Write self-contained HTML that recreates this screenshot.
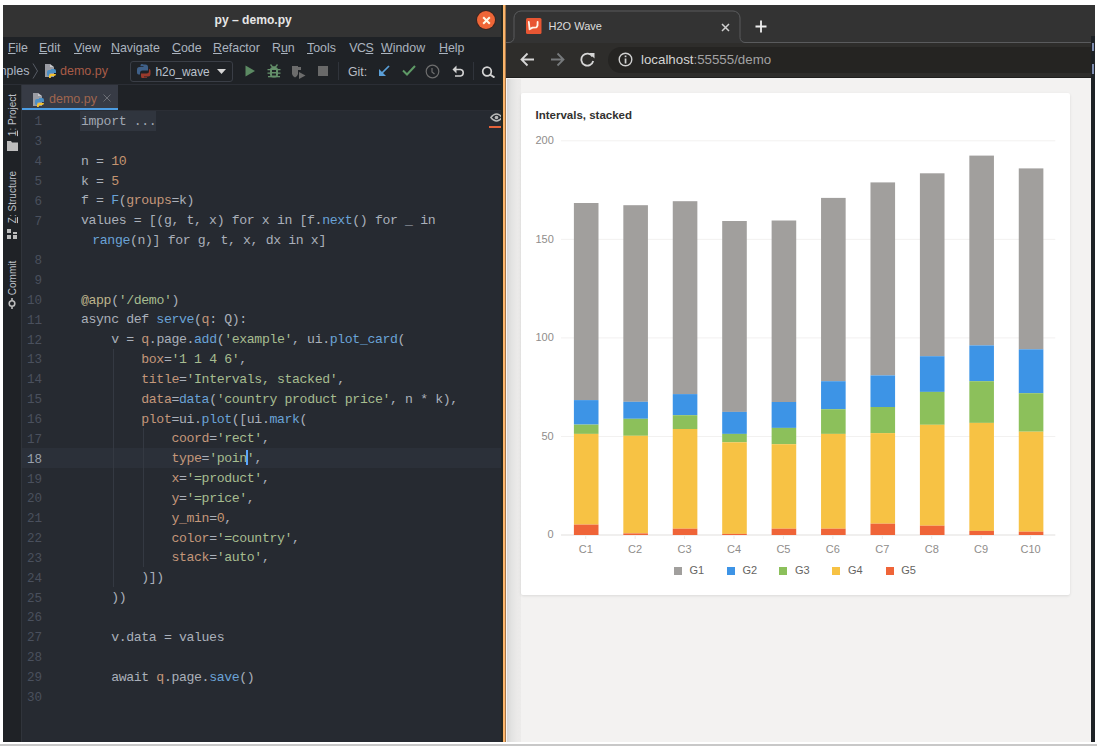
<!DOCTYPE html>
<html><head><meta charset="utf-8">
<style>
*{margin:0;padding:0;box-sizing:border-box}
html,body{width:1097px;height:746px;overflow:hidden;background:#fff;font-family:"Liberation Sans",sans-serif}
.a{position:absolute}
#botline{left:0;top:744px;width:1097px;height:2px;background:#c8c8c8}
/* IDE */
#ide{left:3px;top:5px;width:500px;height:737px;background:#1f2226}
#ttl{left:3px;top:5px;width:500px;height:32px;background:#333333}
#ttltxt{left:214.5px;top:13.3px;font-weight:bold;font-size:12.1px;line-height:14px;color:#e6e6e6;white-space:nowrap}
#closebtn{left:477px;top:11px;width:18px;height:18px;border-radius:50%;background:#ef6637;box-shadow:0 0 0 1px #3a2520}
.mi{position:absolute;top:41px;font-size:12.4px;line-height:14px;color:#abb4bf;white-space:nowrap}
.mi u{text-decoration:underline;text-underline-offset:1px}
#sep1{left:3px;top:84px;width:500px;height:1px;background:#2b2e35}
#sep2{left:22px;top:110px;width:481px;height:1px;background:#2b2e35}
#lsep{left:21px;top:85px;width:1px;height:657px;background:#30343b}
#tabact{left:22px;top:85px;width:96px;height:23px;background:#373b45}
#tabline{left:22px;top:108px;width:96px;height:3px;background:#4c9de3}
#editor{left:22px;top:111px;width:481px;height:631px;background:#262a31;overflow:hidden}
#curline{left:0;width:481px;height:19.84px;background:#2b3039}
.ln{position:absolute;left:1px;margin-top:2.4px;width:19px;text-align:right;font-family:"Liberation Mono",monospace;font-size:12.57px;line-height:19.84px;color:#4a505d}
.ln.cur{color:#9aa1ad}
.cl{position:absolute;left:59px;margin-top:1px;font-family:"Liberation Mono",monospace;font-size:13.2px;letter-spacing:-0.378px;line-height:19.84px;color:#aab0ba;white-space:pre}
.n{color:#c49470}.s{color:#a6bd90}.f{color:#6aa3d7}.p{color:#c4977a}.d{color:#bfb58c}
.imp{background:#30353e;color:#a2a9b4;display:inline-block;padding:0 1px;margin-left:-1px}
.caret{display:inline-block;width:2px;height:15px;background:#5aa6ff;vertical-align:-3px;margin:0 -1px}
.rot{left:-16.6px;width:60px;height:14px;transform:rotate(-90deg);transform-origin:center;font-size:10px;line-height:14px;color:#bcc0c8;white-space:nowrap;text-align:center}
.guide{position:absolute;width:1px;background:#343942}
/* browser */
#orng{left:501px;top:5px;width:6px;height:737px;background:linear-gradient(to right,#23261f 0,#23261f 2px,#fbb56b 2px,#fbb56b 4.5px,#a57649 4.5px,#a57649 6px)}
#br{left:506px;top:5px;width:589px;height:737px;background:#f3f2f1}
#strip{left:506px;top:5px;width:589px;height:38px;background:#333333}
#toolbar{left:506px;top:43px;width:589px;height:35px;background:#2e2d2b;border-bottom:1px solid #1f1f1e}
#page{left:506px;top:79px;width:589px;height:663px;background:#f3f2f1}
#shadow{left:507px;top:79px;width:14px;height:663px;background:linear-gradient(to right,#d3d3d3 0,#e2e2e1 4px,#ebeae9 10px,#eceBea 14px)}
#card{left:521px;top:93px;width:549px;height:502px;background:#fff;border-radius:2px;box-shadow:0 1px 3px rgba(0,0,0,0.10)}
#rstrip{left:1091px;top:36px;width:4px;height:706px;background:#1e2226}
.tick{position:absolute;font-size:11px;line-height:12px;color:#8f8d8b;white-space:nowrap}
.leg{position:absolute;font-size:11px;line-height:12px;color:#666462;white-space:nowrap}
.sq{position:absolute;width:8px;height:8px}
</style></head><body>
<div class="a" id="botline"></div>
<div class="a" id="ide"></div>
<div class="a" id="ttl"></div>
<div class="a" id="ttltxt">py – demo.py</div>
<div class="a" id="closebtn"></div>
<svg class="a" style="left:481.5px;top:15.5px" width="9" height="9" viewBox="0 0 9 9"><path d="M1.2 1.2 L7.8 7.8 M7.8 1.2 L1.2 7.8" stroke="#fffbe8" stroke-width="2"/></svg>
<span class="mi" style="left:8px"><u>F</u>ile</span>
<span class="mi" style="left:39px"><u>E</u>dit</span>
<span class="mi" style="left:74px"><u>V</u>iew</span>
<span class="mi" style="left:111px"><u>N</u>avigate</span>
<span class="mi" style="left:172px"><u>C</u>ode</span>
<span class="mi" style="left:213px"><u>R</u>efactor</span>
<span class="mi" style="left:272px">R<u>u</u>n</span>
<span class="mi" style="left:307px"><u>T</u>ools</span>
<span class="mi" style="left:349.3px;letter-spacing:-0.5px">VC<u>S</u></span>
<span class="mi" style="left:381px"><u>W</u>indow</span>
<span class="mi" style="left:439px"><u>H</u>elp</span>
<div class="a" style="left:3px;top:58px;width:498px;height:26px;overflow:hidden">
 <div class="a" style="left:-27px;top:5.5px;font-size:12.5px;line-height:14px;color:#adb6c2;white-space:nowrap">examples</div>
</div>
<svg class="a" style="left:32px;top:63px" width="7" height="16" viewBox="0 0 7 16"><polyline points="1,0.5 5.5,8 1,15.5" fill="none" stroke="#585d66" stroke-width="1"/></svg>
<svg class="a" style="left:44px;top:63px" width="14" height="15" viewBox="0 0 14 15">
 <path d="M1 1 H6 V4 H10 V14 H1 Z" fill="#9a9ca3"/><path d="M6 1 L10 4 H6 Z" fill="#c8c9cd"/>
 <path d="M7 6 h3 a2 2 0 0 1 2 2 v2 h-5 a2 2 0 0 0 -2 2 v1 h-1 a2 2 0 0 1 -1 -2 v-2 a2 2 0 0 1 2 -2 h2z" fill="#4c8fc4"/>
 <path d="M12 9 v2 a2 2 0 0 1 -2 2 h-3 v1.5 a1 1 0 0 1 -1 0.5 h-1 v-2 a2 2 0 0 1 2 -2 h5z" fill="#f2c230"/>
</svg>
<div class="a" style="left:60px;top:64px;font-size:12.5px;line-height:14px;color:#a85c48;white-space:nowrap">demo.py</div>
<div class="a" style="left:130px;top:61px;width:103px;height:21px;border:1px solid #3a3e46;border-radius:3px"></div>
<svg class="a" style="left:137px;top:64px" width="14" height="14" viewBox="0 0 14 14">
 <path d="M6.5 0.5 h2 a2.5 2.5 0 0 1 2.5 2.5 v3.5 h-5.5 a2.5 2.5 0 0 0 -2.5 2.5 v1.5 h-1.5 a1.8 1.8 0 0 1 -1.5 -1.8 v-3.2 a2.5 2.5 0 0 1 2.5 -2.5 h4 v-0.8 h-3 v-1 a1.5 1.5 0 0 1 1.5 -1.2z" fill="#3f6088"/>
 <path d="M12 5 a1.8 1.8 0 0 1 1.5 1.8 v3.2 a2.5 2.5 0 0 1 -2.5 2.5 h-4 v0.8 h3 v0.5 a1.5 1.5 0 0 1 -1.5 0.7 h-2 a2.5 2.5 0 0 1 -2.5 -2.5 v-2.5 h5.5 a2.5 2.5 0 0 0 2.5 -2.5 v-1.5z" fill="#9a3a2c"/>
</svg>
<div class="a" style="left:155.5px;top:65px;font-size:11.9px;line-height:14px;color:#bac1cc;white-space:nowrap">h2o_wave</div>
<svg class="a" style="left:217px;top:69px" width="9" height="5" viewBox="0 0 9 5"><path d="M0 0 H9 L4.5 5Z" fill="#d6d6d6"/></svg>
<svg class="a" style="left:245px;top:65px" width="11" height="12" viewBox="0 0 11 12"><path d="M0.5 0.5 L10 6 L0.5 11.5Z" fill="#5c8a63"/></svg>
<svg class="a" style="left:267px;top:64px" width="14" height="14" viewBox="0 0 14 14" fill="#64906a">
 <path d="M3.5 0.5 L5.5 3 H8.5 L10.5 0.5" stroke="#64906a" stroke-width="1.3" fill="none"/>
 <rect x="3" y="3" width="8" height="10.5" rx="3"/>
 <rect x="0.5" y="5" width="13" height="1.3"/><rect x="0.5" y="8.5" width="13" height="1.3"/><rect x="1" y="12" width="12" height="1.3"/>
 <rect x="5" y="6" width="4" height="2" fill="#1f2226"/><rect x="5" y="9.5" width="4" height="2" fill="#1f2226"/>
</svg>
<svg class="a" style="left:291px;top:65px" width="16" height="14" viewBox="0 0 16 14">
 <path d="M1 1 H7 V2 H10 V5 H7 V9 L6 11 L4 12.5 L2 11 L1 9Z" fill="#6c6c6c"/>
 <path d="M8 7 L14.5 10.5 L8 14Z" fill="#6c6c6c"/>
</svg>
<div class="a" style="left:318px;top:66px;width:10px;height:10px;background:#696969"></div>
<div class="a" style="left:338px;top:62px;width:1px;height:18px;background:#30343b"></div>
<div class="a" style="left:348px;top:64.5px;font-size:12.3px;line-height:14px;color:#b9bdc4;white-space:nowrap">Git:</div>
<svg class="a" style="left:378px;top:65px" width="12" height="12" viewBox="0 0 12 12"><path d="M11 1 L2 10" stroke="#5a9fd8" stroke-width="1.7"/><path d="M1 4 V11 H8 Z" fill="#5a9fd8"/></svg>
<svg class="a" style="left:402px;top:65px" width="14" height="11" viewBox="0 0 14 11"><path d="M1 5.5 L5 9.5 L13 1" stroke="#5e9a66" stroke-width="2" fill="none"/></svg>
<svg class="a" style="left:425px;top:64px" width="15" height="15" viewBox="0 0 15 15"><circle cx="7.5" cy="7.5" r="6.3" stroke="#6e6e6e" stroke-width="1.2" fill="none"/><path d="M7 4 V8 L9.5 10" stroke="#6e6e6e" stroke-width="1.2" fill="none"/></svg>
<svg class="a" style="left:452px;top:65px" width="13" height="12" viewBox="0 0 13 12"><path d="M3 4.5 H8.5 A3.3 3.3 0 0 1 8.5 11 H3" stroke="#d2d2d2" stroke-width="1.6" fill="none"/><path d="M0.5 4.5 L4.5 0.5 V8.5Z" fill="#d2d2d2"/></svg>
<div class="a" style="left:473px;top:62px;width:1px;height:18px;background:#30343b"></div>
<svg class="a" style="left:481px;top:66px" width="15" height="12" viewBox="0 0 15 12"><circle cx="6" cy="5.5" r="4.3" stroke="#d4d4d4" stroke-width="1.7" fill="none"/><path d="M9 8.5 L13.5 11.5" stroke="#d4d4d4" stroke-width="2"/></svg>

<div class="a" id="sep1"></div>
<div class="a" id="lsep"></div>
<div class="a" id="tabact"></div>
<div class="a" id="tabline"></div>
<svg class="a" style="left:32px;top:92px" width="14" height="15" viewBox="0 0 14 15">
 <path d="M1 1 H6 V4 H10 V14 H1 Z" fill="#9a9ca3"/><path d="M6 1 L10 4 H6 Z" fill="#c8c9cd"/>
 <path d="M7 6 h3 a2 2 0 0 1 2 2 v2 h-5 a2 2 0 0 0 -2 2 v1 h-1 a2 2 0 0 1 -1 -2 v-2 a2 2 0 0 1 2 -2 h2z" fill="#4c8fc4"/>
 <path d="M12 9 v2 a2 2 0 0 1 -2 2 h-3 v1.5 a1 1 0 0 1 -1 0.5 h-1 v-2 a2 2 0 0 1 2 -2 h5z" fill="#f2c230"/>
</svg>
<div class="a" style="left:49px;top:92px;font-size:12.5px;line-height:14px;color:#a0664e;white-space:nowrap">demo.py</div>
<svg class="a" style="left:103px;top:94px" width="8" height="8" viewBox="0 0 8 8"><path d="M0.5 0.5 L7.5 7.5 M7.5 0.5 L0.5 7.5" stroke="#6b6e75" stroke-width="1"/></svg>

<div class="a" id="sep2"></div>
<div class="a" id="editor">
<div class="a" id="curline" style="top:337.28px"></div>
<div class="a" style="left:58px;top:0;width:76px;height:20px;background:#30353e"></div>
<div class="guide" style="left:91px;top:238.08px;height:238.08px"></div>
<div class="guide" style="left:121px;top:317.44px;height:138.88px"></div>
<div class="ln" style="top:0.00px">1</div>
<div class="cl" style="top:0.00px"><span style="color:#a0a7b2">import ...</span></div>
<div class="ln" style="top:19.84px">3</div>
<div class="ln" style="top:39.68px">4</div>
<div class="cl" style="top:39.68px">n = <span class="n">10</span></div>
<div class="ln" style="top:59.52px">5</div>
<div class="cl" style="top:59.52px">k = <span class="n">5</span></div>
<div class="ln" style="top:79.36px">6</div>
<div class="cl" style="top:79.36px">f = <span class="f">F</span>(<span class="p">groups</span>=k)</div>
<div class="ln" style="top:99.20px">7</div>
<div class="cl" style="top:99.20px">values = [(g, t, x) for x in [f.<span class="f">next</span>() for _ in</div>
<div class="cl" style="top:119.04px;left:70.3px"><span class="f">range</span>(n)] for g, t, x, dx in x]</div>
<div class="ln" style="top:138.88px">8</div>
<div class="ln" style="top:158.72px">9</div>
<div class="ln" style="top:178.56px">10</div>
<div class="cl" style="top:178.56px"><span class="d">@app</span>(<span class="s">'/demo'</span>)</div>
<div class="ln" style="top:198.40px">11</div>
<div class="cl" style="top:198.40px">async def <span class="f">serve</span>(<span class="p">q</span>: Q):</div>
<div class="ln" style="top:218.24px">12</div>
<div class="cl" style="top:218.24px">    v = <span class="p">q</span>.page.<span class="f">add</span>(<span class="s">'example'</span>, ui.<span class="f">plot_card</span>(</div>
<div class="ln" style="top:238.08px">13</div>
<div class="cl" style="top:238.08px">        <span class="p">box</span>=<span class="s">'1 1 4 6'</span>,</div>
<div class="ln" style="top:257.92px">14</div>
<div class="cl" style="top:257.92px">        <span class="p">title</span>=<span class="s">'Intervals, stacked'</span>,</div>
<div class="ln" style="top:277.76px">15</div>
<div class="cl" style="top:277.76px">        <span class="p">data</span>=<span class="f">data</span>(<span class="s">'country product price'</span>, n * k),</div>
<div class="ln" style="top:297.60px">16</div>
<div class="cl" style="top:297.60px">        <span class="p">plot</span>=ui.<span class="f">plot</span>([ui.<span class="f">mark</span>(</div>
<div class="ln" style="top:317.44px">17</div>
<div class="cl" style="top:317.44px">            <span class="p">coord</span>=<span class="s">'rect'</span>,</div>
<div class="ln cur" style="top:337.28px">18</div>
<div class="cl" style="top:337.28px">            <span class="p">type</span>=<span class="s">'poin</span><span class="caret"></span><span class="s">'</span>,</div>
<div class="ln" style="top:357.12px">19</div>
<div class="cl" style="top:357.12px">            <span class="p">x</span>=<span class="s">'=product'</span>,</div>
<div class="ln" style="top:376.96px">20</div>
<div class="cl" style="top:376.96px">            <span class="p">y</span>=<span class="s">'=price'</span>,</div>
<div class="ln" style="top:396.80px">21</div>
<div class="cl" style="top:396.80px">            <span class="p">y_min</span>=<span class="n">0</span>,</div>
<div class="ln" style="top:416.64px">22</div>
<div class="cl" style="top:416.64px">            <span class="p">color</span>=<span class="s">'=country'</span>,</div>
<div class="ln" style="top:436.48px">23</div>
<div class="cl" style="top:436.48px">            <span class="p">stack</span>=<span class="s">'auto'</span>,</div>
<div class="ln" style="top:456.32px">24</div>
<div class="cl" style="top:456.32px">        )])</div>
<div class="ln" style="top:476.16px">25</div>
<div class="cl" style="top:476.16px">    ))</div>
<div class="ln" style="top:496.00px">26</div>
<div class="ln" style="top:515.84px">27</div>
<div class="cl" style="top:515.84px">    v.data = values</div>
<div class="ln" style="top:535.68px">28</div>
<div class="ln" style="top:555.52px">29</div>
<div class="cl" style="top:555.52px">    await <span class="p">q</span>.page.<span class="f">save</span>()</div>
<div class="ln" style="top:575.36px">30</div>
</div>
<div class="a rot" style="top:108.35px"><u>1</u>: Project</div>
<svg class="a" style="left:7px;top:141px" width="11" height="10" viewBox="0 0 11 10"><path d="M0 0 H4 L5 1.5 H11 V10 H0Z" fill="#bdbdbd"/></svg>
<div class="a rot" style="top:190.25px"><u>Z</u>: Structure</div>
<svg class="a" style="left:7px;top:229px" width="10" height="10" viewBox="0 0 10 10" fill="#bdbdbd"><rect x="0" y="0" width="4" height="4"/><rect x="0" y="6" width="4" height="4"/><rect x="6" y="6" width="4" height="4"/><rect x="6" y="3" width="4" height="2"/></svg>
<div class="a rot" style="top:271.25px">Commit</div>
<svg class="a" style="left:6px;top:298px" width="12" height="11" viewBox="0 0 12 11"><circle cx="6" cy="5.5" r="2.8" stroke="#bdbdbd" stroke-width="1.6" fill="none"/><path d="M6 0 V2.5 M6 8.5 V11" stroke="#bdbdbd" stroke-width="1.6"/></svg>
<svg class="a" style="left:490px;top:113px" width="13" height="9" viewBox="0 0 13 9"><path d="M0.8 4.5 Q6.5 -2.5 12.2 4.5 Q6.5 11.5 0.8 4.5Z" stroke="#b8b8b8" stroke-width="1.3" fill="none"/><circle cx="6.5" cy="4.5" r="1.8" fill="#b8b8b8"/></svg>
<div class="a" style="left:489px;top:126px;width:14px;height:2px;background:#e5623a"></div>

<div class="a" id="orng"></div>
<div class="a" id="br"></div>
<div class="a" id="strip"></div>
<div class="a" id="toolbar"></div>
<div class="a" id="page"></div>
<div class="a" id="shadow"></div>
<div class="a" id="card"></div>
<svg class="a" style="left:506px;top:5px" width="589" height="40" viewBox="0 0 589 40">
 <path d="M0 37.5 H3 A5 5 0 0 0 8 32.5 V13 A7 7 0 0 1 15 6 H227 A7 7 0 0 1 234 13 V32.5 A5 5 0 0 0 239 37.5 H589" stroke="#5a5b5d" stroke-width="1" fill="none"/>
</svg>
<svg class="a" style="left:526px;top:18px" width="16" height="16" viewBox="0 0 16 16">
 <rect x="0" y="0" width="15.5" height="16" rx="1.5" fill="#e85633"/>
 <path d="M2.8 4 L3.6 11.3 L6.5 9.6 L10.5 9.4 L11.5 7.5 L11.6 4" stroke="#fff6ea" stroke-width="1.8" fill="none" stroke-linejoin="round" stroke-linecap="round"/>
</svg>
<div class="a" style="left:548.5px;top:20px;font-size:11px;line-height:13px;color:#dcdcdc;white-space:nowrap">H2O Wave</div>
<svg class="a" style="left:721px;top:23px" width="9" height="9" viewBox="0 0 9 9"><path d="M1 1 L8 8 M8 1 L1 8" stroke="#d0d0d0" stroke-width="1.5"/></svg>
<svg class="a" style="left:755px;top:20px" width="12" height="13" viewBox="0 0 12 13"><path d="M6 0.5 V12.5 M0.5 6.5 H11.5" stroke="#f0f0f0" stroke-width="1.8"/></svg>
<div class="a" style="left:608px;top:46.5px;width:487px;height:26px;border-radius:13px 0 0 13px;background:#252422"></div>
<svg class="a" style="left:520px;top:52px" width="15" height="15" viewBox="0 0 15 15"><path d="M14 7.5 H1.5 M7.5 1.5 L1.5 7.5 L7.5 13.5" stroke="#d6d6d6" stroke-width="1.8" fill="none"/></svg>
<svg class="a" style="left:550px;top:52px" width="15" height="15" viewBox="0 0 15 15"><path d="M1 7.5 H13.5 M7.5 1.5 L13.5 7.5 L7.5 13.5" stroke="#76797b" stroke-width="1.8" fill="none"/></svg>
<svg class="a" style="left:580px;top:52px" width="16" height="15" viewBox="0 0 16 15"><path d="M12.5 4.5 A6 6 0 1 0 13.2 9" stroke="#d6d6d6" stroke-width="1.8" fill="none"/><path d="M9 1 H14.5 V6.5Z" fill="#d6d6d6"/></svg>
<svg class="a" style="left:618px;top:52px" width="15" height="15" viewBox="0 0 15 15"><circle cx="7.5" cy="7.5" r="6.3" stroke="#d0d0d0" stroke-width="1.4" fill="none"/><rect x="6.7" y="6.5" width="1.7" height="5" fill="#d0d0d0"/><rect x="6.7" y="3.5" width="1.7" height="1.7" fill="#d0d0d0"/></svg>
<div class="a" style="left:641px;top:52.3px;font-size:13.3px;line-height:16px;color:#a2a2a2;white-space:nowrap"><span style="color:#d4d4d4">localhost</span>:55555/demo</div>

<svg class="a" style="left:0;top:0" width="1097" height="746" viewBox="0 0 1097 746">
<rect x="561" y="534.50" width="494.3" height="1" fill="#e1dfdd"/>
<rect x="561" y="435.95" width="494.3" height="1" fill="#f2f1f0"/>
<rect x="561" y="337.40" width="494.3" height="1" fill="#f2f1f0"/>
<rect x="561" y="238.85" width="494.3" height="1" fill="#f2f1f0"/>
<rect x="561" y="140.30" width="494.3" height="1" fill="#f2f1f0"/>
<rect x="573.90" y="203.00" width="24.6" height="197.10" fill="#a19f9d"/>
<rect x="573.90" y="400.10" width="24.6" height="24.50" fill="#3d94e6"/>
<rect x="573.90" y="424.60" width="24.6" height="9.30" fill="#8cc05b"/>
<rect x="573.90" y="433.90" width="24.6" height="90.70" fill="#f7c244"/>
<rect x="573.90" y="524.60" width="24.6" height="10.40" fill="#ef6438"/>
<rect x="585.22" y="536" width="1" height="3" fill="#edebe9"/>
<rect x="623.33" y="205.20" width="24.6" height="196.60" fill="#a19f9d"/>
<rect x="623.33" y="401.80" width="24.6" height="17.00" fill="#3d94e6"/>
<rect x="623.33" y="418.80" width="24.6" height="17.00" fill="#8cc05b"/>
<rect x="623.33" y="435.80" width="24.6" height="97.60" fill="#f7c244"/>
<rect x="623.33" y="533.40" width="24.6" height="1.60" fill="#ef6438"/>
<rect x="634.64" y="536" width="1" height="3" fill="#edebe9"/>
<rect x="672.76" y="201.20" width="24.6" height="192.90" fill="#a19f9d"/>
<rect x="672.76" y="394.10" width="24.6" height="21.10" fill="#3d94e6"/>
<rect x="672.76" y="415.20" width="24.6" height="13.80" fill="#8cc05b"/>
<rect x="672.76" y="429.00" width="24.6" height="99.70" fill="#f7c244"/>
<rect x="672.76" y="528.70" width="24.6" height="6.30" fill="#ef6438"/>
<rect x="684.08" y="536" width="1" height="3" fill="#edebe9"/>
<rect x="722.19" y="221.00" width="24.6" height="190.90" fill="#a19f9d"/>
<rect x="722.19" y="411.90" width="24.6" height="22.00" fill="#3d94e6"/>
<rect x="722.19" y="433.90" width="24.6" height="8.40" fill="#8cc05b"/>
<rect x="722.19" y="442.30" width="24.6" height="91.60" fill="#f7c244"/>
<rect x="722.19" y="533.90" width="24.6" height="1.10" fill="#ef6438"/>
<rect x="733.50" y="536" width="1" height="3" fill="#edebe9"/>
<rect x="771.62" y="220.50" width="24.6" height="181.50" fill="#a19f9d"/>
<rect x="771.62" y="402.00" width="24.6" height="25.90" fill="#3d94e6"/>
<rect x="771.62" y="427.90" width="24.6" height="16.30" fill="#8cc05b"/>
<rect x="771.62" y="444.20" width="24.6" height="84.50" fill="#f7c244"/>
<rect x="771.62" y="528.70" width="24.6" height="6.30" fill="#ef6438"/>
<rect x="782.93" y="536" width="1" height="3" fill="#edebe9"/>
<rect x="821.05" y="197.90" width="24.6" height="183.30" fill="#a19f9d"/>
<rect x="821.05" y="381.20" width="24.6" height="28.00" fill="#3d94e6"/>
<rect x="821.05" y="409.20" width="24.6" height="24.70" fill="#8cc05b"/>
<rect x="821.05" y="433.90" width="24.6" height="94.80" fill="#f7c244"/>
<rect x="821.05" y="528.70" width="24.6" height="6.30" fill="#ef6438"/>
<rect x="832.37" y="536" width="1" height="3" fill="#edebe9"/>
<rect x="870.48" y="182.40" width="24.6" height="193.00" fill="#a19f9d"/>
<rect x="870.48" y="375.40" width="24.6" height="31.60" fill="#3d94e6"/>
<rect x="870.48" y="407.00" width="24.6" height="26.10" fill="#8cc05b"/>
<rect x="870.48" y="433.10" width="24.6" height="90.60" fill="#f7c244"/>
<rect x="870.48" y="523.70" width="24.6" height="11.30" fill="#ef6438"/>
<rect x="881.80" y="536" width="1" height="3" fill="#edebe9"/>
<rect x="919.91" y="173.30" width="24.6" height="182.90" fill="#a19f9d"/>
<rect x="919.91" y="356.20" width="24.6" height="35.70" fill="#3d94e6"/>
<rect x="919.91" y="391.90" width="24.6" height="32.90" fill="#8cc05b"/>
<rect x="919.91" y="424.80" width="24.6" height="100.90" fill="#f7c244"/>
<rect x="919.91" y="525.70" width="24.6" height="9.30" fill="#ef6438"/>
<rect x="931.23" y="536" width="1" height="3" fill="#edebe9"/>
<rect x="969.34" y="155.60" width="24.6" height="189.80" fill="#a19f9d"/>
<rect x="969.34" y="345.40" width="24.6" height="35.80" fill="#3d94e6"/>
<rect x="969.34" y="381.20" width="24.6" height="41.70" fill="#8cc05b"/>
<rect x="969.34" y="422.90" width="24.6" height="108.00" fill="#f7c244"/>
<rect x="969.34" y="530.90" width="24.6" height="4.10" fill="#ef6438"/>
<rect x="980.65" y="536" width="1" height="3" fill="#edebe9"/>
<rect x="1018.77" y="168.40" width="24.6" height="180.90" fill="#a19f9d"/>
<rect x="1018.77" y="349.30" width="24.6" height="43.90" fill="#3d94e6"/>
<rect x="1018.77" y="393.20" width="24.6" height="38.50" fill="#8cc05b"/>
<rect x="1018.77" y="431.70" width="24.6" height="100.00" fill="#f7c244"/>
<rect x="1018.77" y="531.70" width="24.6" height="3.30" fill="#ef6438"/>
<rect x="1030.09" y="536" width="1" height="3" fill="#edebe9"/>
</svg>
<div class="a" style="left:535.5px;top:108px;font-size:11.5px;font-weight:bold;line-height:14px;color:#323130;white-space:nowrap">Intervals, stacked</div>
<div class="tick" style="left:535.5px;top:134px">200</div>
<div class="tick" style="left:535.5px;top:232.5px">150</div>
<div class="tick" style="left:535.5px;top:331px">100</div>
<div class="tick" style="left:541.5px;top:429.5px">50</div>
<div class="tick" style="left:547.5px;top:528px">0</div>
<div class="tick" style="left:565.72px;width:40px;text-align:center;top:543px">C1</div>
<div class="tick" style="left:615.14px;width:40px;text-align:center;top:543px">C2</div>
<div class="tick" style="left:664.58px;width:40px;text-align:center;top:543px">C3</div>
<div class="tick" style="left:714.00px;width:40px;text-align:center;top:543px">C4</div>
<div class="tick" style="left:763.43px;width:40px;text-align:center;top:543px">C5</div>
<div class="tick" style="left:812.87px;width:40px;text-align:center;top:543px">C6</div>
<div class="tick" style="left:862.30px;width:40px;text-align:center;top:543px">C7</div>
<div class="tick" style="left:911.73px;width:40px;text-align:center;top:543px">C8</div>
<div class="tick" style="left:961.15px;width:40px;text-align:center;top:543px">C9</div>
<div class="tick" style="left:1010.59px;width:40px;text-align:center;top:543px">C10</div>
<div class="sq" style="left:674.0px;top:567px;background:#a19f9d"></div><div class="leg" style="left:689.5px;top:564px">G1</div>
<div class="sq" style="left:727.0px;top:567px;background:#3d94e6"></div><div class="leg" style="left:742.5px;top:564px">G2</div>
<div class="sq" style="left:779.4px;top:567px;background:#8cc05b"></div><div class="leg" style="left:794.9px;top:564px">G3</div>
<div class="sq" style="left:832.4px;top:567px;background:#f7c244"></div><div class="leg" style="left:847.9px;top:564px">G4</div>
<div class="sq" style="left:885.7px;top:567px;background:#ef6438"></div><div class="leg" style="left:901.2px;top:564px">G5</div>

<div class="a" id="rstrip"></div>
<div class="a" style="left:1091.5px;top:43px;width:2px;height:8px;background:#7f8db0"></div>
<div class="a" style="left:1091.5px;top:64px;width:2px;height:10px;background:#7f8db0"></div>
</body></html>
